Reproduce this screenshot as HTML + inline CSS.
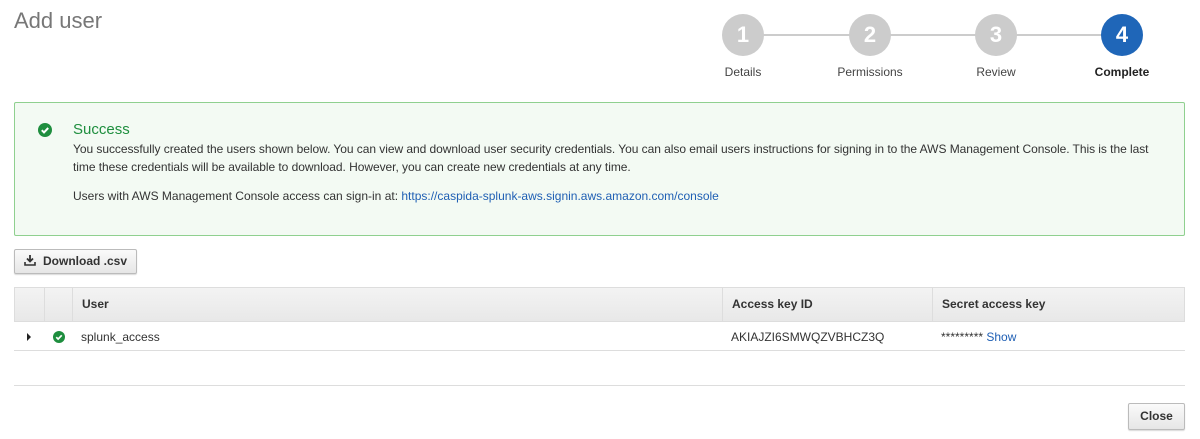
<!DOCTYPE html>
<html><head><style>
*{margin:0;padding:0;box-sizing:border-box}
body{width:1200px;height:439px;background:#fff;font-family:"Liberation Sans",Arial,sans-serif;color:#333;position:relative;overflow:hidden;font-size:12px}
.abs{position:absolute}
.title{left:14px;top:8px;font-size:22px;color:#777}
.line{top:34px;height:2px;background:#ccc}
.c{width:42px;height:42px;border-radius:50%;background:#ccc;color:#fff;font-weight:bold;font-size:22px;text-align:center;line-height:42px;top:14px}
.lbl{top:65px;font-size:12px;color:#444;width:120px;text-align:center}
.box{left:14px;top:102px;width:1171px;height:134px;border:1px solid #8fd08f;background:#f3faf3;border-radius:2px}
.btn{border:1px solid #bbb;border-radius:2px;background:linear-gradient(#fafafa,#e6e6e6);font-weight:bold;font-size:12px;color:#333;box-shadow:0 1px 1px rgba(0,0,0,.15)}
.hd{left:14px;top:287px;width:1171px;height:35px;background:linear-gradient(#f3f3f3,#e8e8e8);border:1px solid #ddd}
.hd div{position:absolute;top:0;height:33px;line-height:33px;border-left:1px solid #ddd;padding-left:9px;font-weight:bold;color:#333}
</style></head><body>
<div class="abs title">Add user</div>
<div class="abs line" style="left:743px;width:380px"></div>
<div class="abs c" style="left:722px">1</div>
<div class="abs c" style="left:849px">2</div>
<div class="abs c" style="left:975px">3</div>
<div class="abs c" style="left:1101px;background:#1f66b8">4</div>
<div class="abs lbl" style="left:683px">Details</div>
<div class="abs lbl" style="left:810px">Permissions</div>
<div class="abs lbl" style="left:936px">Review</div>
<div class="abs lbl" style="left:1062px;font-weight:bold;color:#222">Complete</div>

<div class="abs box"></div>
<svg class="abs" style="left:38px;top:123px" width="14" height="14" viewBox="0 0 14 14"><circle cx="7" cy="7" r="7" fill="#1e8e3e"/><path d="M3.8 7.2l2.2 2.2 4.2-4.4" stroke="#fff" stroke-width="2" fill="none"/></svg>
<div class="abs" style="left:73px;top:121px;font-size:15px;color:#1e8e3e">Success</div>
<div class="abs" style="left:73px;top:140px;width:1090px;line-height:18px;color:#333;letter-spacing:-0.05px">You successfully created the users shown below. You can view and download user security credentials. You can also email users instructions for signing in to the AWS Management Console. This is the last time these credentials will be available to download. However, you can create new credentials at any time.</div>
<div class="abs" style="left:73px;top:189px;color:#333">Users with AWS Management Console access can sign-in at: <span style="color:#1f5fb4">https://caspida-splunk-aws.signin.aws.amazon.com/console</span></div>

<div class="abs btn" style="left:14px;top:249px;width:123px;height:25px;line-height:23px;padding-left:28px">Download .csv</div>
<svg class="abs" style="left:24px;top:254px" width="12" height="12" viewBox="0 0 12 12"><path d="M6 1v6M3 4.5l3 3 3-3" stroke="#333" stroke-width="1.8" fill="none"/><path d="M1 8v3h10V8" stroke="#333" stroke-width="1.6" fill="none"/></svg>

<div class="abs hd">
<div style="left:29px;width:28px"></div>
<div style="left:57px">User</div>
<div style="left:707px">Access key ID</div>
<div style="left:917px">Secret access key</div>
</div>
<div class="abs" style="left:14px;top:350px;width:1171px;height:1px;background:#ddd"></div>
<div class="abs" style="left:27px;top:333px;width:0;height:0;border-left:4px solid #222;border-top:4px solid transparent;border-bottom:4px solid transparent"></div>
<svg class="abs" style="left:53px;top:331px" width="12" height="12" viewBox="0 0 14 14"><circle cx="7" cy="7" r="7" fill="#1e8e3e"/><path d="M3.8 7.2l2.2 2.2 4.2-4.4" stroke="#fff" stroke-width="2" fill="none"/></svg>
<div class="abs" style="left:81px;top:330px">splunk_access</div>
<div class="abs" style="left:731px;top:330px">AKIAJZI6SMWQZVBHCZ3Q</div>
<div class="abs" style="left:941px;top:330px">********* <span style="color:#1f5fb4">Show</span></div>
<div class="abs" style="left:14px;top:385px;width:1171px;height:1px;background:#ddd"></div>
<div class="abs btn" style="left:1128px;top:403px;width:57px;height:27px;line-height:25px;text-align:center">Close</div>
</body></html>
